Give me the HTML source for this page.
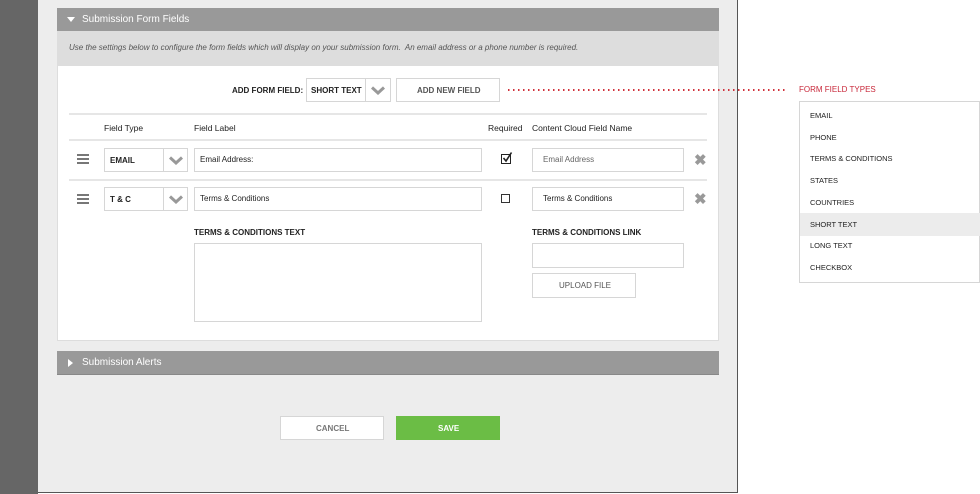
<!DOCTYPE html>
<html><head><meta charset="utf-8"><style>
*{margin:0;padding:0;box-sizing:border-box}
body{width:980px;height:494px;overflow:hidden;background:#fff;font-family:"Liberation Sans",Arial,sans-serif;position:relative;color:#222}
.a{position:absolute}
.box{position:absolute;background:#fff;border:1px solid #d6d6d6}
.t{position:absolute;font-size:8px;white-space:nowrap}
.b{font-weight:bold}
.chev{position:absolute;width:14px;height:9px}
.line{position:absolute;height:2px;background:#e6e6e6;left:69px;width:638px}
.ham{position:absolute;left:77px;width:12px;height:2px;background:#777;box-shadow:0 4px 0 #777,0 8px 0 #777}
.x{position:absolute;font-size:15px;color:#999;font-weight:bold}
.li{position:absolute;left:810px;font-size:7.5px;color:#222}
</style></head><body>
<div class="a" style="left:0;top:0;width:38px;height:494px;background:#666"></div>
<div class="a" style="left:38px;top:0;width:700px;height:493px;background:#ededed;border-right:1px solid #555;border-bottom:1px solid #555"></div>

<div class="a" style="left:57px;top:8px;width:662px;height:23px;background:#999"></div>
<div class="a" style="left:67px;top:17px;width:0;height:0;border-left:4px solid transparent;border-right:4px solid transparent;border-top:5px solid #fff"></div>
<div class="t" style="left:82px;top:14px;font-size:10px;color:#fff">Submission Form Fields</div>
<div class="a" style="left:57px;top:31px;width:662px;height:35px;background:#ddd"></div>
<div class="t" style="left:69px;top:43px;font-style:italic;color:#555">Use the settings below to configure the form fields which will display on your submission form.&nbsp; An email address or a phone number is required.</div>
<div class="box" style="left:57px;top:65px;width:662px;height:276px;border-color:#ddd"></div>

<div class="t b" style="left:232px;top:86px">ADD FORM FIELD:</div>
<div class="box" style="left:306px;top:78px;width:85px;height:24px"></div>
<div class="a" style="left:365px;top:78px;width:1px;height:24px;background:#d6d6d6"></div>
<div class="t b" style="left:311px;top:86px">SHORT TEXT</div>
<svg class="chev" style="left:371px;top:86px" viewBox="0 0 14 9"><path d="M1 1.5L7 7L13 1.5" fill="none" stroke="#999" stroke-width="3"/></svg>
<div class="box" style="left:396px;top:78px;width:104px;height:24px"></div>
<div class="t b" style="left:417px;top:86px;color:#555">ADD NEW FIELD</div>
<div class="a" style="left:508px;top:89px;width:278px;height:1.5px;background:repeating-linear-gradient(90deg,#d0303a 0 1.5px,transparent 1.5px 5px)"></div>

<div class="line" style="top:113px"></div>
<div class="t" style="left:104px;top:123px;font-size:8.5px">Field Type</div>
<div class="t" style="left:194px;top:123px;font-size:8.5px">Field Label</div>
<div class="t" style="left:488px;top:123px;font-size:8.5px">Required</div>
<div class="t" style="left:532px;top:123px;font-size:8.5px">Content Cloud Field Name</div>
<div class="line" style="top:139px"></div>

<div class="ham" style="left:77px;top:154px"></div>
<div class="box" style="left:104px;top:148px;width:84px;height:24px"></div>
<div class="a" style="left:163px;top:148px;width:1px;height:24px;background:#d6d6d6"></div>
<div class="t b" style="left:110px;top:156px">EMAIL</div>
<svg class="chev" style="left:169px;top:156px" viewBox="0 0 14 9"><path d="M1 1.5L7 7L13 1.5" fill="none" stroke="#999" stroke-width="3"/></svg>
<div class="box" style="left:194px;top:148px;width:288px;height:24px"></div>
<div class="t" style="left:200px;top:155px">Email Address:</div>
<div class="a" style="left:501px;top:154px;width:10px;height:10px;border:1px solid #222"></div>
<svg class="a" style="left:501px;top:151px" width="12" height="12" viewBox="0 0 12 12"><path d="M2.5 7L5 10L10.5 1.5" fill="none" stroke="#222" stroke-width="1.6"/></svg>
<div class="box" style="left:532px;top:148px;width:152px;height:24px"></div>
<div class="t" style="left:543px;top:155px;color:#666">Email Address</div>
<div class="x" style="left:694px;top:151px">✖</div>
<div class="line" style="top:179px"></div>

<div class="ham" style="left:77px;top:194px"></div>
<div class="box" style="left:104px;top:187px;width:84px;height:24px"></div>
<div class="a" style="left:163px;top:187px;width:1px;height:24px;background:#d6d6d6"></div>
<div class="t b" style="left:110px;top:195px">T &amp; C</div>
<svg class="chev" style="left:169px;top:195px" viewBox="0 0 14 9"><path d="M1 1.5L7 7L13 1.5" fill="none" stroke="#999" stroke-width="3"/></svg>
<div class="box" style="left:194px;top:187px;width:288px;height:24px"></div>
<div class="t" style="left:200px;top:194px">Terms &amp; Conditions</div>
<div class="a" style="left:501px;top:194px;width:9px;height:9px;border:1px solid #333"></div>
<div class="box" style="left:532px;top:187px;width:152px;height:24px"></div>
<div class="t" style="left:543px;top:194px">Terms &amp; Conditions</div>
<div class="x" style="left:694px;top:190px">✖</div>

<div class="t b" style="left:194px;top:228px">TERMS &amp; CONDITIONS TEXT</div>
<div class="box" style="left:194px;top:243px;width:288px;height:79px"></div>
<div class="t b" style="left:532px;top:228px">TERMS &amp; CONDITIONS LINK</div>
<div class="box" style="left:532px;top:243px;width:152px;height:25px"></div>
<div class="box" style="left:532px;top:273px;width:104px;height:25px"></div>
<div class="t" style="left:559px;top:281px;color:#555">UPLOAD FILE</div>

<div class="a" style="left:57px;top:351px;width:662px;height:24px;background:#999;border-bottom:1px solid #888"></div>
<div class="a" style="left:68px;top:359px;width:0;height:0;border-top:4px solid transparent;border-bottom:4px solid transparent;border-left:5px solid #fff"></div>
<div class="t" style="left:82px;top:357px;font-size:10px;color:#fff">Submission Alerts</div>

<div class="box" style="left:280px;top:416px;width:104px;height:24px"></div>
<div class="t b" style="left:316px;top:424px;color:#777">CANCEL</div>
<div class="a" style="left:396px;top:416px;width:104px;height:24px;background:#6bbd45"></div>
<div class="t b" style="left:438px;top:424px;color:#fff">SAVE</div>

<div class="t" style="left:799px;top:85px;color:#c8283a">FORM FIELD TYPES</div>
<div class="box" style="left:799px;top:101px;width:181px;height:182px"></div>
<div class="a" style="left:800px;top:213px;width:180px;height:23px;background:#ececec"></div>
<div class="li" style="top:111px">EMAIL</div>
<div class="li" style="top:133px">PHONE</div>
<div class="li" style="top:154px">TERMS &amp; CONDITIONS</div>
<div class="li" style="top:176px">STATES</div>
<div class="li" style="top:198px">COUNTRIES</div>
<div class="li" style="top:220px">SHORT TEXT</div>
<div class="li" style="top:241px">LONG TEXT</div>
<div class="li" style="top:263px">CHECKBOX</div>
</body></html>
